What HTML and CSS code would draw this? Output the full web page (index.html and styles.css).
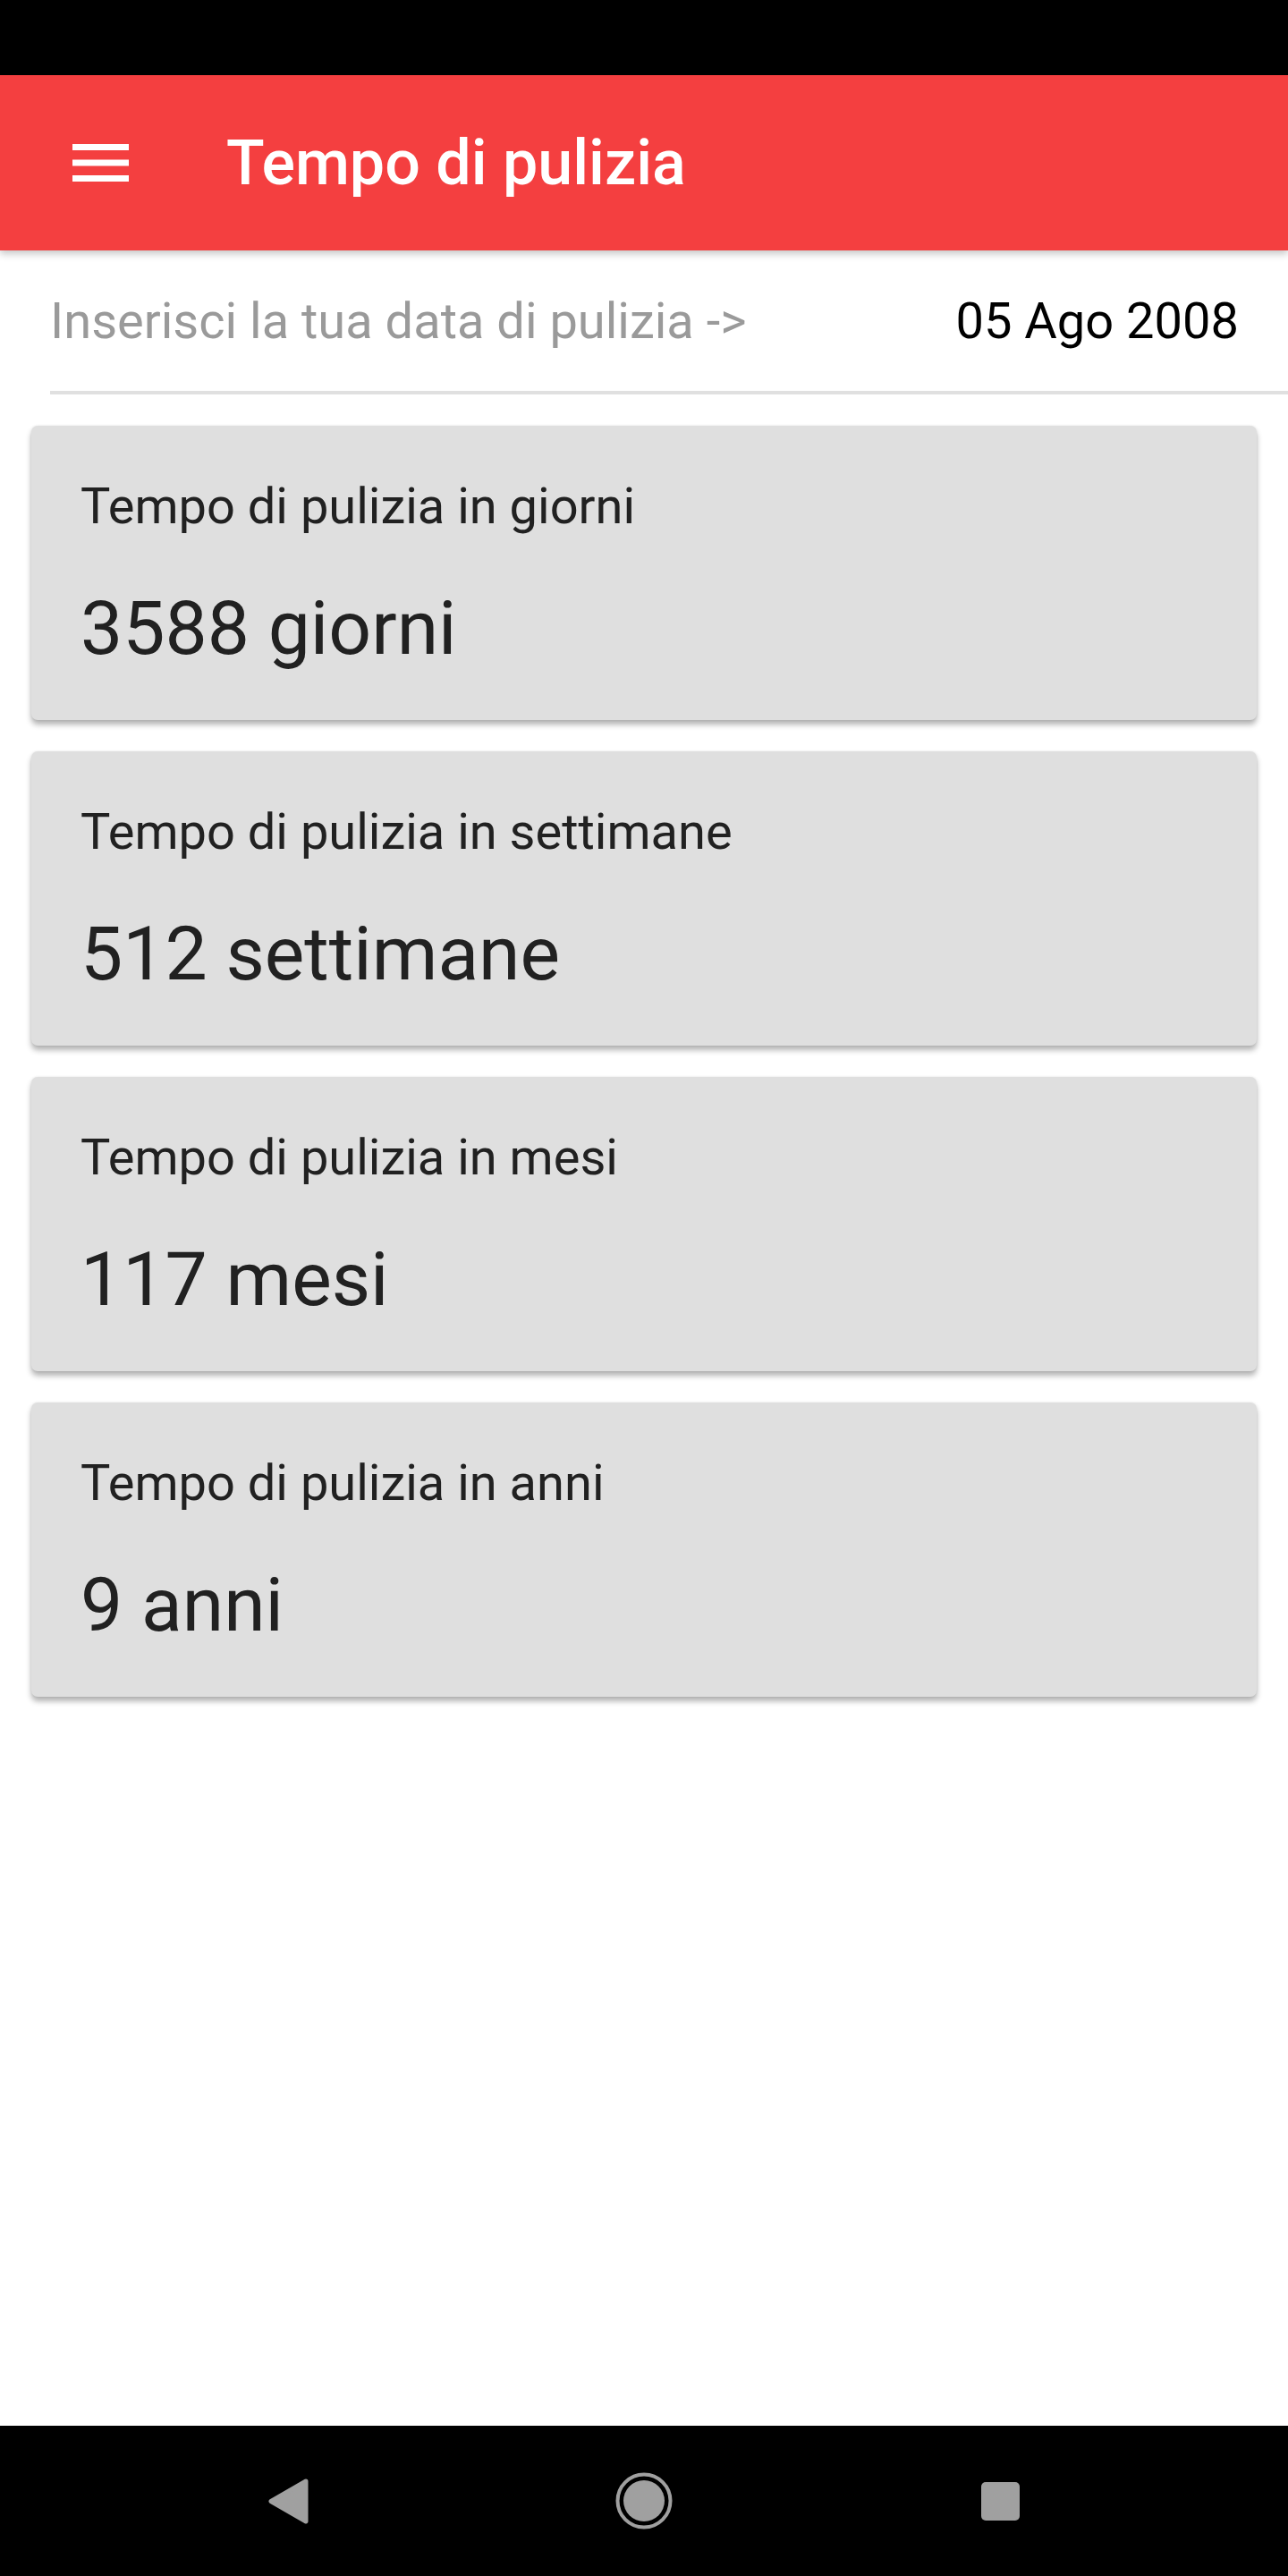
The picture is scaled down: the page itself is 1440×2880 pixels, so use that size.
FILE: index.html
```html
<!DOCTYPE html>
<html lang="it">
<head>
    <meta charset="UTF-8">
    <meta name="viewport" content="width=device-width, initial-scale=1.0">
    <title>Tempo di pulizia</title>
    <link rel="stylesheet" href="styles.css">
</head>
<body>
    <div class="phone">
        <div class="status-bar"></div>

        <header class="app-bar">
            <svg class="menu-icon" viewBox="3 6 18 12" width="63" height="42">
                <rect x="3" y="6" width="18" height="2" fill="#fff"/>
                <rect x="3" y="11" width="18" height="2" fill="#fff"/>
                <rect x="3" y="16" width="18" height="2" fill="#fff"/>
            </svg>
            <h1 class="app-title">Tempo di pulizia</h1>
        </header>

        <div class="date-row">
            <span class="date-hint">Inserisci la tua data di pulizia -&gt;</span>
            <span class="date-value">05 Ago 2008</span>
        </div>

        <main class="cards">
            <div class="card">
                <div class="card-label">Tempo di pulizia in giorni</div>
                <div class="card-value">3588 giorni</div>
            </div>
            <div class="card">
                <div class="card-label">Tempo di pulizia in settimane</div>
                <div class="card-value">512 settimane</div>
            </div>
            <div class="card">
                <div class="card-label">Tempo di pulizia in mesi</div>
                <div class="card-value">117 mesi</div>
            </div>
            <div class="card">
                <div class="card-label">Tempo di pulizia in anni</div>
                <div class="card-value">9 anni</div>
            </div>
        </main>

        <nav class="nav-bar">
            <div class="nav-cell">
                <svg width="45" height="51" viewBox="-3 -3 45 51">
                    <polygon points="39,0 0,22.5 39,45" fill="#a0a0a0" stroke="#a0a0a0" stroke-width="5" stroke-linejoin="round"/>
                </svg>
            </div>
            <div class="nav-cell">
                <svg width="64" height="64" viewBox="0 0 64 64">
                    <circle cx="32" cy="32" r="29.5" fill="none" stroke="#a0a0a0" stroke-width="4"/>
                    <circle cx="32" cy="32" r="23" fill="#a0a0a0"/>
                </svg>
            </div>
            <div class="nav-cell">
                <div class="recents"></div>
            </div>
        </nav>
    </div>
</body>
</html>
```

FILE: styles.css
```css
/* base */
body {
    margin: 0;
    font-family: Roboto, "Noto Sans", sans-serif;
    background-color: #fff;
}
.phone {
    width: 1440px;
    height: 2880px;
    display: flex;
    flex-direction: column;
    overflow: hidden;
}
.status-bar {
    height: 84px;
    background-color: #000;
    flex-shrink: 0;
}

/* toolbar */
.app-bar {
    height: 196px;
    flex-shrink: 0;
    display: flex;
    align-items: center;
    background-color: #f43f40;
    box-shadow: 0 4px 8px rgba(0, 0, 0, 0.22);
    position: relative;
    z-index: 1;
}
.menu-icon {
    margin-left: 81px;
    display: block;
}
.app-title {
    margin: 0 0 0 109px;
    font-size: 70px;
    font-weight: 500;
    line-height: 82px;
    color: #fff;
}

/* date picker row */
.date-row {
    margin-left: 56px;
    padding: 46px 55px 45px 0;
    display: flex;
    justify-content: space-between;
    align-items: center;
    border-bottom: 4px solid #e0e0e0;
    font-size: 56px;
    line-height: 66px;
}
.date-hint {
    color: #9a9a9a;
}
.date-value {
    color: #000;
}

/* result cards */
.cards {
    flex: 1;
    padding: 35px 35px 0;
    display: flex;
    flex-direction: column;
    gap: 35px;
}
.card {
    height: 329px;
    box-sizing: border-box;
    padding: 57px 55px 0;
    background-color: #dfdfdf;
    border-radius: 7px;
    box-shadow: 0 5px 6px rgba(0, 0, 0, 0.3), 0 0 3px rgba(0, 0, 0, 0.08);
    color: #212121;
}
.card-label {
    font-size: 56px;
    line-height: 66px;
}
.card-value {
    margin-top: 54px;
    font-size: 84px;
    line-height: 100px;
}

/* android nav */
.nav-bar {
    height: 168px;
    flex-shrink: 0;
    background-color: #000;
    display: flex;
    justify-content: center;
    align-items: center;
}
.nav-cell {
    width: 398px;
    display: flex;
    justify-content: center;
    align-items: center;
}
.nav-cell svg {
    display: block;
}
.recents {
    width: 43px;
    height: 43px;
    border-radius: 5px;
    background-color: #a0a0a0;
}
```
